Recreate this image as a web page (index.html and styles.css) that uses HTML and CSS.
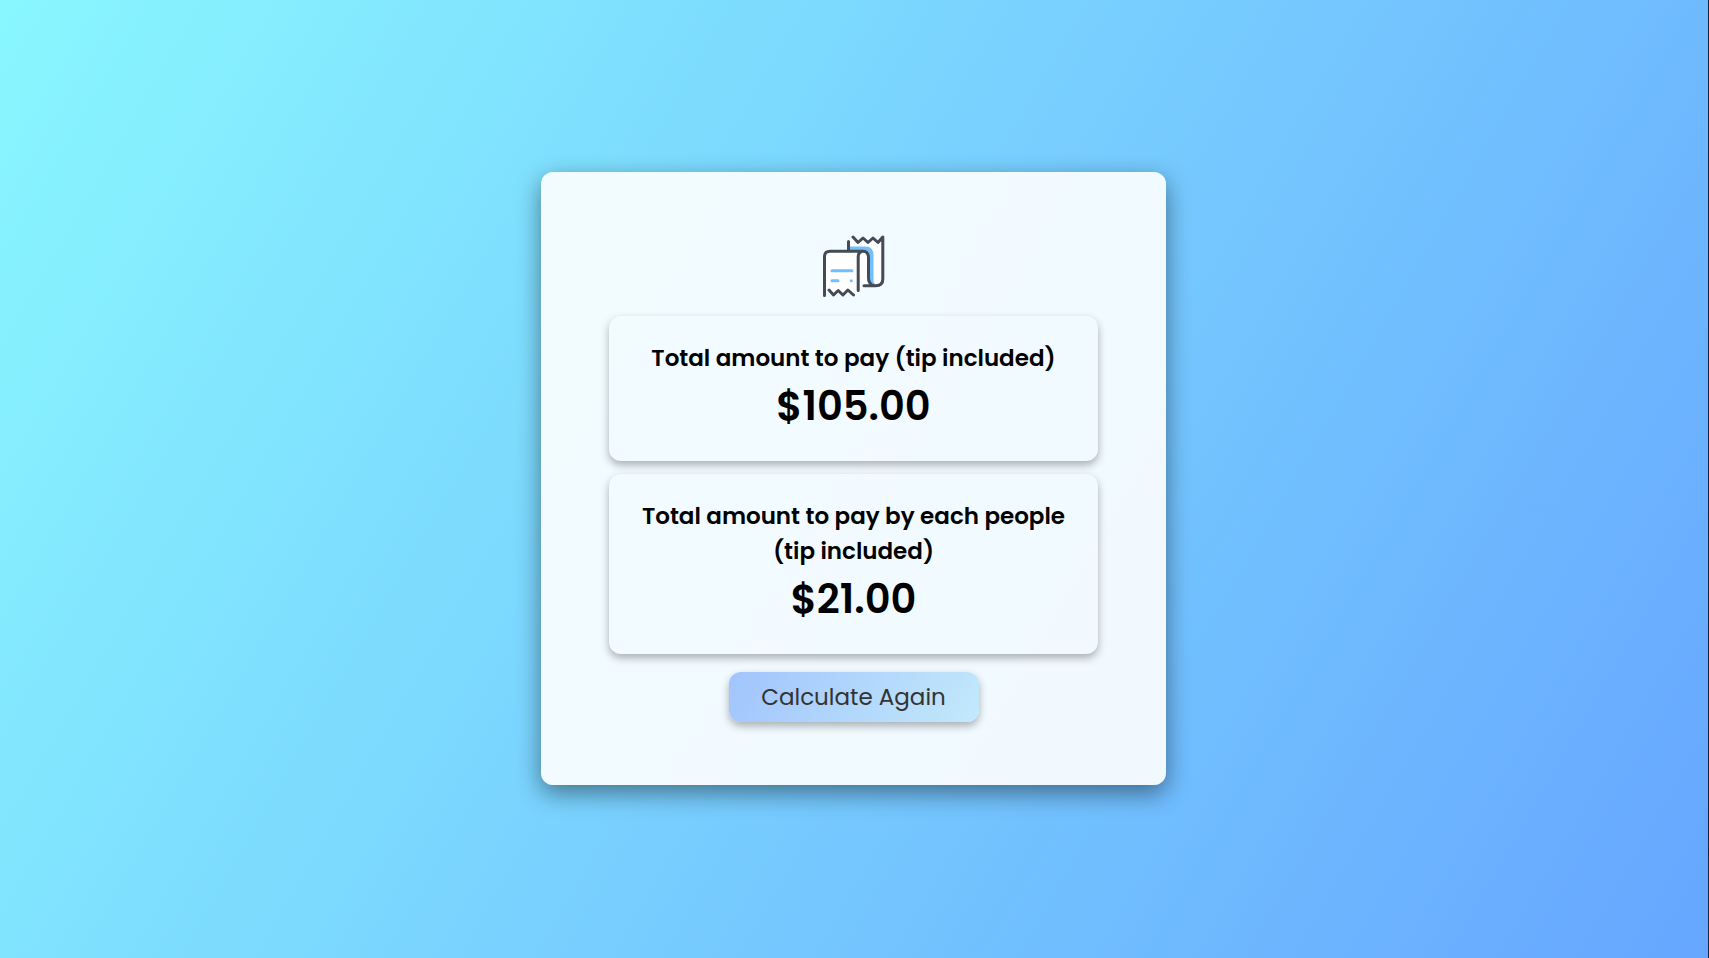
FILE: index.html
```
<!DOCTYPE html>
<html lang="en">
<head>
    <meta charset="UTF-8">
    <meta name="viewport" content="width=device-width, initial-scale=1.0">
    <title>Tip Calculator</title>
    <link rel="stylesheet" href="styles.css">
</head>
<body>
    <main class="container">
        <svg class="bill-icon" viewBox="0 0 64 64" aria-hidden="true">
            <path class="paper" d="M31 3l5 5.500 5-4.500 5 4.500 5-4.500 5 4.500 4.800-5.500V45q0 6.700-7 6.700H42L28 17V12z"/>
            <path class="paper" d="M2.500 61V23q0-5.700 5.500-5.700h34l-5.800 5V58l-4.400 3-5.500-5-5.300 5-5-5-4.500 5-4.500-5z"/>
            <path class="band" d="M28 14.500h15.500q6 0 6 7V46q0 4 2 5"/>
            <path class="ink" d="M26.500 7.500V16M31 3l5 5.500 5-4.500 5 4.500 5-4.500 5 4.500 4.800-5.500V45q0 6.700-7 6.700H42"/>
            <path class="ink" d="M2.500 61.500V23q0-5.700 5.500-5.700h33.500q5 .5 5 6V44q0 5.500 4.500 7.500M36.200 56.500V23q0-5.200 4.800-5.700M7 56l4.500 5 4.700-4.500 4.700 4.500 5-5 5.600 5"/>
            <path class="lines" d="M10 36.800h20M10 46.700h6M29.200 46.700h.1"/>
        </svg>

        <section class="result">
            <h2>Total amount to pay (tip included)</h2>
            <p class="amount">$105.00</p>
        </section>

        <section class="result">
            <h2>Total amount to pay by each people (tip included)</h2>
            <p class="amount">$21.00</p>
        </section>

        <button type="button" class="again-btn">Calculate Again</button>
    </main>
</body>
</html>
```
FILE: styles.css
```
* {
    margin: 0;
    padding: 0;
    box-sizing: border-box;
}
body {
    font-family: 'Poppins', 'Inter', sans-serif;
    display: flex;
    align-items: center;
    justify-content: center;
    min-height: 100vh;
    padding: 0 1px 1px 0;
    border-right: 1px solid #10243f;
    background: linear-gradient(120deg, #89f7fe 0%, #66a6ff 100%);
    color: #000;
}
.container {
    display: flex;
    flex-direction: column;
    align-items: center;
    width: 90%;
    max-width: 625px;
    padding: 62px 62px 63px;
    border-radius: 12px;
    background-color: rgba(255, 255, 255, 0.9);
    box-shadow: 0 8px 24px rgba(0, 0, 0, 0.45);
}
.bill-icon {
    width: 64px;
    height: 64px;
    margin-bottom: 12px;
    fill: none;
    stroke-linecap: round;
    stroke-linejoin: round;
}
.paper {
    fill: #fff;
}
.band {
    stroke: #70bfff;
    stroke-width: 4;
}
.ink {
    stroke: #444b54;
    stroke-width: 3;
}
.lines {
    stroke: #70bfff;
    stroke-width: 3;
}
.result {
    align-self: stretch;
    margin: 6px;
    padding: 25px;
    border-radius: 12px;
    text-align: center;
    box-shadow: 0 4px 8px rgba(0, 0, 0, 0.3);
}
.result + .result {
    margin-top: 7px;
}
.result h2 {
    font-size: 23px;
    font-weight: 600;
    line-height: 35px;
}
.amount {
    font-size: 40px;
    font-weight: 600;
    line-height: 60px;
}
.again-btn {
    width: 250px;
    height: 50px;
    margin-top: 12px;
    border: none;
    border-radius: 12px;
    background: linear-gradient(120deg, #a1c4fd 0%, #c2e9fb 100%);
    box-shadow: 0 4px 8px rgba(0, 0, 0, 0.3);
    color: #333;
    font-family: inherit;
    font-size: 23px;
    cursor: pointer;
}
```
